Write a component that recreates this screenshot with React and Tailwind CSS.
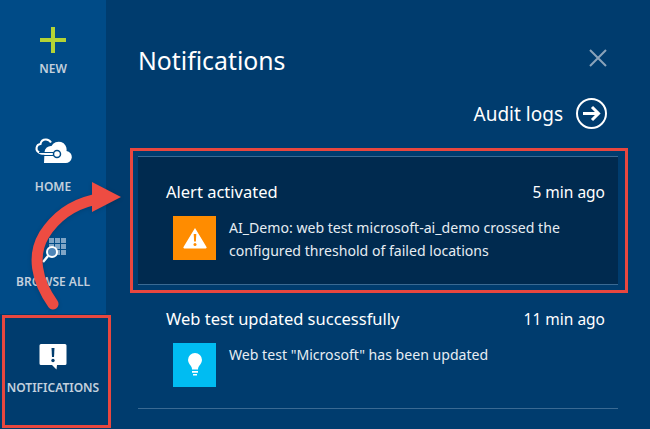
const NavItem = ({ label, icon, className = '', labelClass = '' }) => {
    return (
        <div className={`flex flex-col items-center ${className}`}>
            <div className="h-[40px] flex items-center justify-center">{icon}</div>
            <span className={`text-[12px] leading-[16px] font-semibold text-[#c3d0dd] whitespace-nowrap ${labelClass}`}>{label}</span>
        </div>
    );
};

const PlusIcon = () => (
    <svg width="26" height="26" viewBox="0 0 26 26">
        <path d="M11 0h4v26h-4z" fill="#b4d335" />
        <path d="M0 11h26v4H0z" fill="#b4d335" />
    </svg>
);

const CloudIcon = () => (
    <svg width="38" height="26" viewBox="0 0 38 26">
        <path d="M10 25h21a6 6 0 0 0 1.500-12 8 8 0 0 0-15-5 6.500 6.500 0 0 0-7 6z" fill="#fff" />
        <path d="M17 4.500a6 6 0 0 0-5-3 5.500 5.500 0 0 0-5.500 4.500 4.500 4.500 0 0 0-1.500 8.500 5 5 0 0 0 3 1.300h15" fill="none" stroke="#fff" strokeWidth="2" />
        <path d="M5 14.500h18v3H8" fill="none" stroke="#004b87" strokeWidth="1" />
        <circle cx="23" cy="16" r="3.500" fill="#fff" stroke="#004b87" strokeWidth="1.500" />
    </svg>
);

const BrowseIcon = () => (
    <svg width="28" height="28" viewBox="0 0 28 28">
        <g fill="#7fa5c6">
            {[0, 1, 2].map((row) =>
                [0, 1, 2].map((col) => (
                    <rect key={`${row}-${col}`} x={10 + col * 6} y={3 + row * 6} width="5" height="5" />
                ))
            )}
        </g>
        <circle cx="13" cy="17" r="5" fill="#4f86b8" stroke="#fff" strokeWidth="2" />
        <path d="M9 21l-5 6" stroke="#fff" strokeWidth="2.500" />
    </svg>
);

const AlertBubble = () => (
    <svg width="28" height="27" viewBox="0 0 28 27">
        <path d="M2 1h24a1.500 1.500 0 0 1 1.500 1.500v18a1.500 1.500 0 0 1-1.500 1.500H18l-.5 4.500-4.500-4.500H2A1.500 1.500 0 0 1 .5 20.500v-18A1.500 1.500 0 0 1 2 1z" fill="#fff" />
        <path d="M12.500 5h3l-.5 9h-2z" fill="#003c6e" />
        <circle cx="14" cy="17.500" r="1.700" fill="#003c6e" />
    </svg>
);

const WarnIcon = () => (
    <svg width="24" height="22" viewBox="0 0 24 22">
        <path d="M12 1L23.500 20a1 1 0 0 1-1 1.500h-21a1 1 0 0 1-1-1.500z" fill="#fff" />
        <path d="M10.700 7h2.600l-.4 7.500h-1.800z" fill="#ff8c00" />
        <circle cx="12" cy="17.500" r="1.500" fill="#ff8c00" />
    </svg>
);

const BulbIcon = () => (
    <svg width="16" height="24" viewBox="0 0 16 24">
        <path d="M8 0a7 7 0 0 1 7 7c0 3-2.500 5-3.500 7-.4.8-.5 1.500-.5 2.500H5c0-1-.1-1.700-.5-2.500C3.500 12 1 10 1 7a7 7 0 0 1 7-7z" fill="#fff" />
        <path d="M5 18h6v1.800H5zM6 21h4v1.500H6z" fill="#fff" />
    </svg>
);

const Notification = ({ title, time, icon, iconBg, lines }) => {
    return (
        <div>
            <div className="flex items-baseline justify-between">
                <span className="text-[16.5px] leading-[22px] text-white">{title}</span>
                <span className="text-[15.5px] leading-[20px] text-white">{time}</span>
            </div>
            <div className="flex gap-[13px] mt-[13px] ml-[7px]">
                <div className={`w-[43px] h-[44px] shrink-0 flex items-center justify-center ${iconBg}`}>{icon}</div>
                <div className="text-[14.1px] leading-[23px] text-[#e6edf3]">
                    {lines.map((line) => (
                        <div key={line} className="whitespace-nowrap">{line}</div>
                    ))}
                </div>
            </div>
        </div>
    );
};

export default function App() {
    return (
        <div className="relative w-[650px] h-[429px] overflow-hidden flex bg-[#003c6e] font-['Noto_Sans','Open_Sans',sans-serif]">
            <aside className="w-[106px] shrink-0 flex flex-col bg-[#004b87]">
                <NavItem label="NEW" icon={<PlusIcon />} className="pt-[20px]" labelClass="mt-[1px]" />
                <NavItem label="HOME" icon={<CloudIcon />} className="pt-[54px]" labelClass="mt-[8px]" />
                <NavItem label="BROWSE ALL" icon={<BrowseIcon />} className="pt-[34px]" labelClass="mt-[5px]" />
                <div className="mt-[24px] flex-1 bg-[#003c6e] w-[106px] flex flex-col items-center pt-[26px]">
                    <div className="h-[32px] flex items-center"><AlertBubble /></div>
                    <span className="mt-[8px] text-[12px] leading-[16px] font-semibold text-[#c3d0dd]">NOTIFICATIONS</span>
                </div>
            </aside>

            <main className="flex-1 min-w-0 flex flex-col">
                <header className="flex items-center justify-between pl-[32px] pr-[43px] pt-[42px]">
                    <h1 className="text-[24.8px] leading-[36px] text-white">Notifications</h1>
                    <svg width="18" height="18" viewBox="0 0 18 18" className="mt-[-4px]">
                        <path d="M1 1l16 16M17 1L1 17" stroke="#8ba3ba" strokeWidth="2" />
                    </svg>
                </header>
                <div className="flex items-center justify-end gap-[13px] pr-[43px] mt-[20px]">
                    <span className="text-[19px] leading-[28px] text-white">Audit logs</span>
                    <svg width="31" height="31" viewBox="0 0 31 31">
                        <circle cx="15.500" cy="15.500" r="14.500" fill="none" stroke="#fff" strokeWidth="2" />
                        <path d="M7 15.500h15M16 9l6.500 6.500L16 22" fill="none" stroke="#fff" strokeWidth="3" />
                    </svg>
                </div>

                <section className="ml-[32px] mr-[32px] mt-[27px] h-[129px] pt-[24px] pl-[28px] pr-[13px] bg-[#002a4f] border-y border-[#3a6a93]">
                    <Notification
                        title="Alert activated"
                        time="5 min ago"
                        icon={<WarnIcon />}
                        iconBg="bg-[#ff8c00]"
                        lines={['AI_Demo: web test microsoft-ai_demo crossed the', 'configured threshold of failed locations']}
                    />
                </section>

                <section className="ml-[32px] mr-[32px] h-[124px] pt-[23px] pl-[28px] pr-[13px] border-b border-[#3a6a93]">
                    <Notification
                        title="Web test updated successfully"
                        time="11 min ago"
                        icon={<BulbIcon />}
                        iconBg="bg-[#00bcf2]"
                        lines={['Web test "Microsoft" has been updated']}
                    />
                </section>
            </main>

            {/* callouts drawn over the screenshot */}
            <div className="absolute left-[130px] top-[148px] w-[498px] h-[145px] border-[3px] border-[#e8473f]"></div>
            <div className="absolute left-[2px] top-[315px] w-[109px] h-[113px] border-[3px] border-[#e8473f]"></div>
            <svg className="absolute left-0 top-0 drop-shadow-sm" width="650" height="429" viewBox="0 0 650 429">
                <path d="M53 304C36 280 32 255 44 235C56 216 72 205 93 200" fill="none" stroke="#ee4c42" strokeWidth="11" strokeLinecap="round" />
                <path d="M92 182L121 197L92 212z" fill="#ee4c42" />
            </svg>
        </div>
    );
}
